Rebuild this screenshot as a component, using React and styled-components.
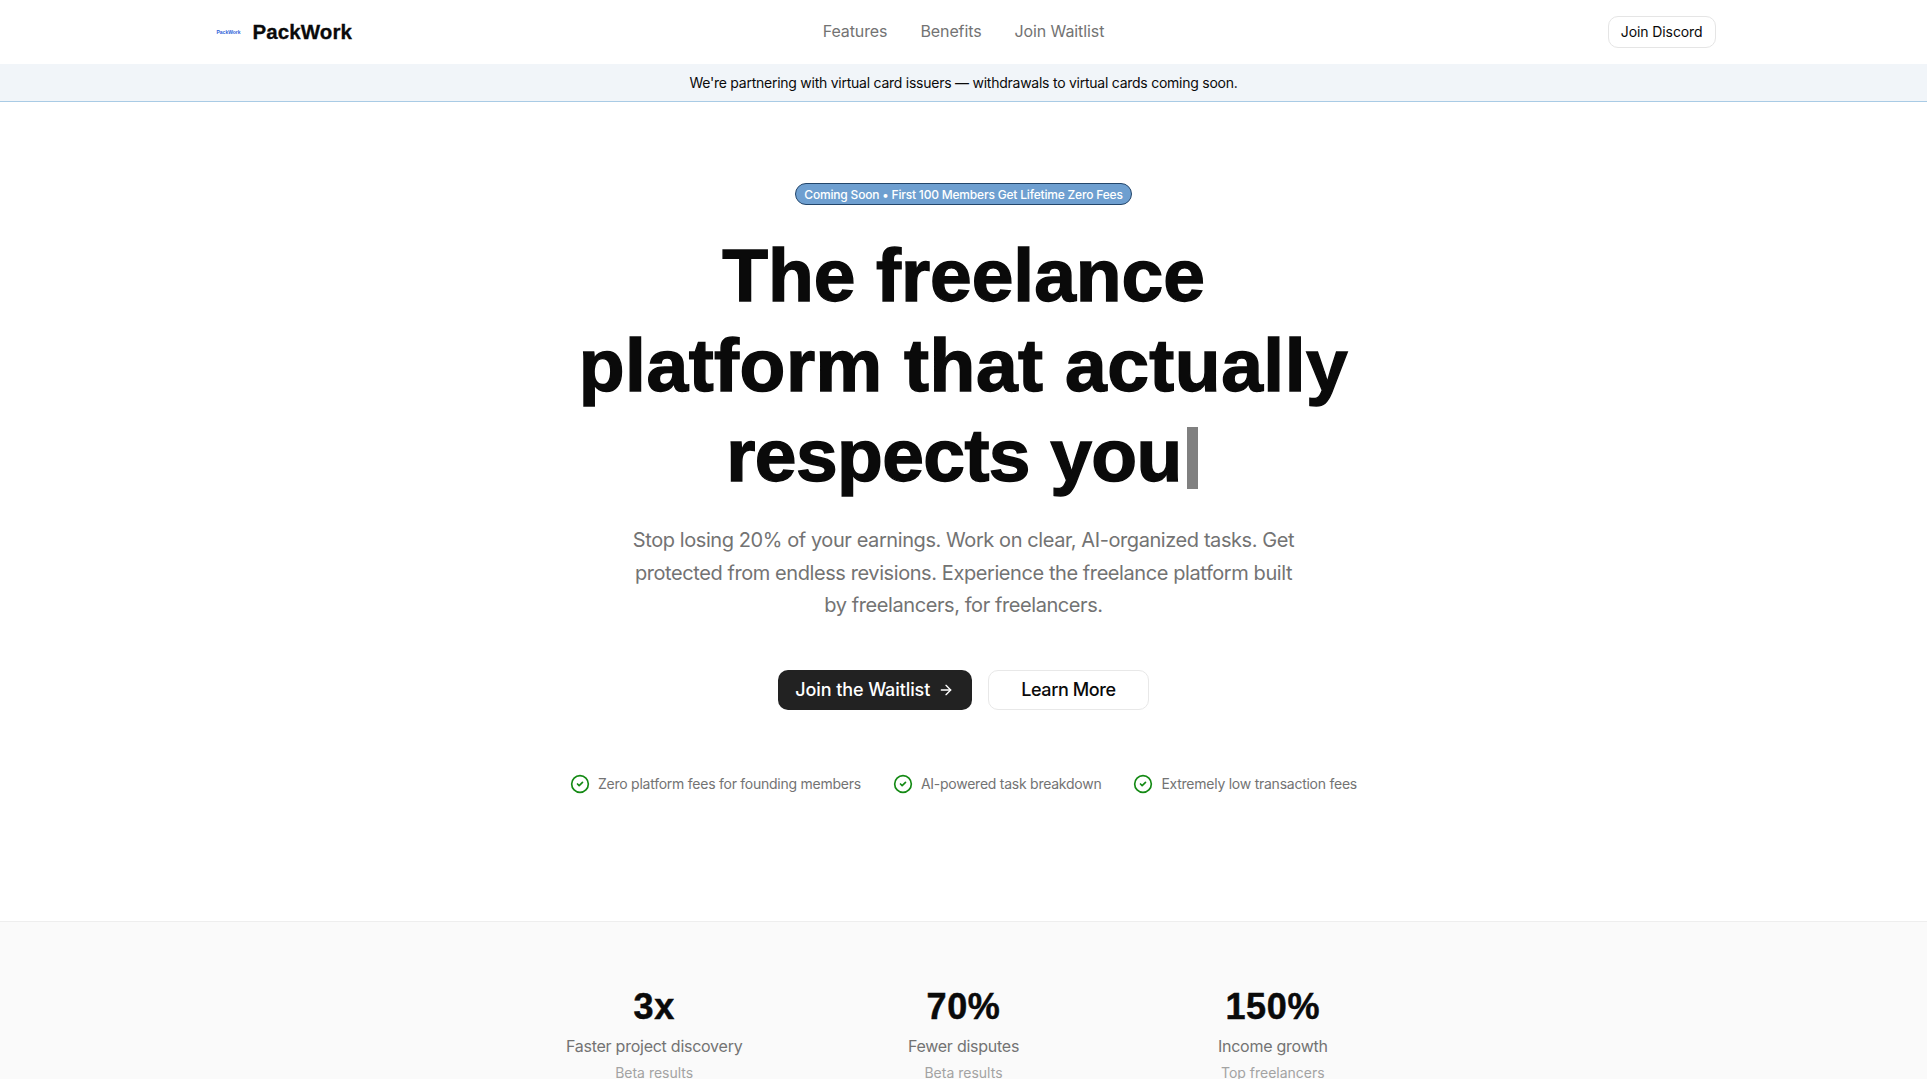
import React from "react";
import styled, { createGlobalStyle } from "styled-components";
import { ArrowRight, CircleCheck } from "lucide-react";

const Global = createGlobalStyle`
  html, body { margin: 0; padding: 0; background: #fff; }
  body { font-family: Inter, "Liberation Sans", sans-serif; color: #0a0a0a; overflow: hidden; height: 1079px; }
  * { box-sizing: border-box; }
`;
const Nav = styled.header`height: 64px; display: flex; justify-content: center; background: #fff;`;
const NavInner = styled.div`width: 1504px; display: grid; grid-template-columns: 1fr auto 1fr; align-items: center;`;
const Brand = styled.div`display: flex; align-items: center; gap: 12px; padding-left: 5px;`;
const LogoMark = styled.span`font-family: "Liberation Sans", sans-serif; font-size: 5px; font-weight: 700; color: #2f62d8; width: 24px; white-space: nowrap;`;
const BrandName = styled.span`font-family: "Liberation Sans", sans-serif; font-weight: 700; font-size: 20.5px; letter-spacing: 0.1px; -webkit-text-stroke: 0.3px #0a0a0a; color: #0a0a0a;`;
const Links = styled.nav`display: flex; gap: 33px; padding-bottom: 2px;`;
const NavLink = styled.a`font-size: 16px; color: #737373; letter-spacing: -0.1px;`;
const DiscordWrap = styled.div`display: flex; justify-content: flex-end;`;
const Discord = styled.button`height: 32px; padding: 0 12px 1px; border: 1px solid #e5e5e5; border-radius: 10px; background: #fff; font: 400 14px Inter, sans-serif; letter-spacing: -0.1px; color: #0a0a0a;`;
const Banner = styled.div`height: 38px; background: #f1f5f9; border-bottom: 1px solid #a9cbe5; display: flex; align-items: center; justify-content: center; font-size: 14px; font-weight: 400; letter-spacing: -0.25px;`;
const Hero = styled.section`height: 820px; display: flex; flex-direction: column; align-items: center; padding-top: 81px; border-bottom: 1px solid #eee;`;
const Badge = styled.div`height: 22px; padding: 0 8px; border-radius: 11px; background: #6e9fd0; border: 1px solid #23466b; color: #fff; font-size: 12px; font-weight: 500; letter-spacing: -0.19px; display: flex; align-items: center;`;
const Title = styled.h1`margin: 25px 0 0; font-family: "Liberation Sans", sans-serif; font-size: 75px; line-height: 90px; font-weight: 700; text-align: center; -webkit-text-stroke: 1.4px #0a0a0a;`;
const TitleLine = styled.span`display: block; letter-spacing: ${p => p.$spacing}px;`;
const Caret = styled.span`display: inline-block; width: 11px; height: 62px; background: #808080; vertical-align: -8px; margin: 0 3px 0 5px; -webkit-text-stroke: 0;`;
const Lead = styled.p`margin: 24px 0 0; width: 672px; font-size: 20px; line-height: 32.5px; color: #737373; text-align: center; letter-spacing: -0.42px;`;
const Actions = styled.div`margin-top: 48px; display: flex; gap: 16px;`;
const Primary = styled.button`height: 40px; padding: 0 17.5px; display: flex; align-items: center; gap: 8px; background: #222; color: #fff; border: 0; border-radius: 10px; font: 500 18px Inter, sans-serif; letter-spacing: -0.1px;`;
const Secondary = styled.button`height: 40px; padding: 0 32.5px; background: #fff; color: #0a0a0a; border: 1px solid #e8e8e8; border-radius: 10px; font: 500 18px Inter, sans-serif; letter-spacing: -0.4px;`;
const Checks = styled.div`margin-top: 64px; display: flex; gap: 32px;`;
const Check = styled.div`display: flex; align-items: center; gap: 8px; font-size: 14px; color: #737373; letter-spacing: -0.25px;`;
const Stats = styled.section`background: #fafafa; padding-top: 65px; display: flex; justify-content: center; height: 300px;`;
const StatsGrid = styled.div`width: 928px; display: grid; grid-template-columns: repeat(3, 1fr);`;
const Stat = styled.div`text-align: center;`;
const Value = styled.div`font-family: "Liberation Sans", sans-serif; font-size: 36px; font-weight: 700; line-height: 40px; letter-spacing: 0.7px; -webkit-text-stroke: 0.5px #0a0a0a;`;
const Label = styled.div`font-size: 16px; color: #737373; margin-top: 7px; line-height: 24px; letter-spacing: -0.25px;`;
const Sub = styled.div`font-size: 14px; color: #a3a3a3; margin-top: 5px; line-height: 20px;`;

export default function App() {
  return (
    <>
      <Global />
      <Nav>
        <NavInner>
          <Brand><LogoMark>PackWork</LogoMark><BrandName>PackWork</BrandName></Brand>
          <Links><NavLink>Features</NavLink><NavLink>Benefits</NavLink><NavLink>Join Waitlist</NavLink></Links>
          <DiscordWrap><Discord>Join Discord</Discord></DiscordWrap>
        </NavInner>
      </Nav>
      <Banner>We're partnering with virtual card issuers — withdrawals to virtual cards coming soon.</Banner>
      <Hero>
        <Badge>Coming Soon • First 100 Members Get Lifetime Zero Fees</Badge>
        <Title>
          <TitleLine $spacing={-0.07}>The freelance</TitleLine>
          <TitleLine $spacing={0.5}>platform that actually</TitleLine>
          <TitleLine $spacing={-0.6}>respects you<Caret /></TitleLine>
        </Title>
        <Lead>Stop losing 20% of your earnings. Work on clear, AI-organized tasks. Get protected from endless revisions. Experience the freelance platform built by freelancers, for freelancers.</Lead>
        <Actions>
          <Primary>Join the Waitlist <ArrowRight size={16} /></Primary>
          <Secondary>Learn More</Secondary>
        </Actions>
        <Checks>
          {["Zero platform fees for founding members", "AI-powered task breakdown", "Extremely low transaction fees"].map(t => (
            <Check key={t}><CircleCheck size={20} color="#148a14" />{t}</Check>
          ))}
        </Checks>
      </Hero>
      <Stats>
        <StatsGrid>
          <Stat><Value>3x</Value><Label>Faster project discovery</Label><Sub>Beta results</Sub></Stat>
          <Stat><Value>70%</Value><Label>Fewer disputes</Label><Sub>Beta results</Sub></Stat>
          <Stat><Value>150%</Value><Label>Income growth</Label><Sub>Top freelancers</Sub></Stat>
        </StatsGrid>
      </Stats>
    </>
  );
}
